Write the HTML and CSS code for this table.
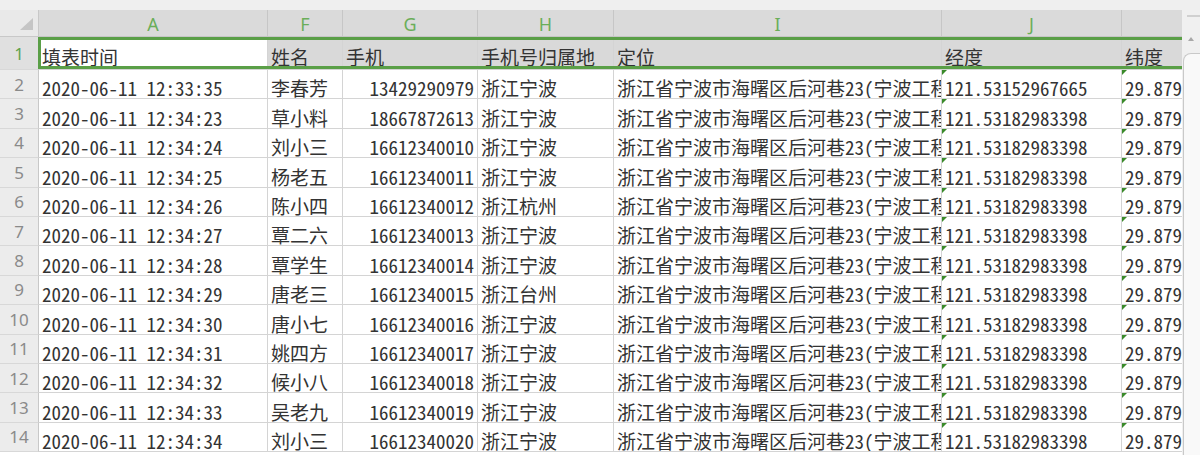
FILE: index.html
```html
<!DOCTYPE html>
<html lang="zh-CN">
<head>
<meta charset="utf-8">
<title>Sheet</title>
<link rel="stylesheet" href="styles.css">
</head>
<body>
<div class="topbar"></div>
<div class="main">
  <div class="sheet">
    <div class="corner"><svg width="13" height="12" viewBox="0 0 13 12"><polygon points="0,12 13,0 13,12" fill="#c5c5c5"/></svg></div>
    <div class="colhead">A</div>
    <div class="colhead">F</div>
    <div class="colhead">G</div>
    <div class="colhead">H</div>
    <div class="colhead">I</div>
    <div class="colhead">J</div>
    <div class="colhead">K</div>

    <div class="rowhead sel">1</div>
    <div class="cell first active">填表时间</div>
    <div class="cell first sel">姓名</div>
    <div class="cell first sel">手机</div>
    <div class="cell first sel">手机号归属地</div>
    <div class="cell first sel">定位</div>
    <div class="cell first sel">经度</div>
    <div class="cell first sel">纬度</div>

    <div class="rowhead">2</div>
    <div class="cell">2020-06-11 12:33:35</div>
    <div class="cell">李春芳</div>
    <div class="cell num">13429290979</div>
    <div class="cell">浙江宁波</div>
    <div class="cell">浙江省宁波市海曙区后河巷23(宁波工程学院)</div>
    <div class="cell flag">121.53152967665</div>
    <div class="cell flag">29.87951283645</div>

    <div class="rowhead">3</div>
    <div class="cell">2020-06-11 12:34:23</div>
    <div class="cell">草小料</div>
    <div class="cell num">18667872613</div>
    <div class="cell">浙江宁波</div>
    <div class="cell">浙江省宁波市海曙区后河巷23(宁波工程学院)</div>
    <div class="cell flag">121.53182983398</div>
    <div class="cell flag">29.87951283645</div>

    <div class="rowhead">4</div>
    <div class="cell">2020-06-11 12:34:24</div>
    <div class="cell">刘小三</div>
    <div class="cell num">16612340010</div>
    <div class="cell">浙江宁波</div>
    <div class="cell">浙江省宁波市海曙区后河巷23(宁波工程学院)</div>
    <div class="cell flag">121.53182983398</div>
    <div class="cell flag">29.87951283645</div>

    <div class="rowhead">5</div>
    <div class="cell">2020-06-11 12:34:25</div>
    <div class="cell">杨老五</div>
    <div class="cell num">16612340011</div>
    <div class="cell">浙江宁波</div>
    <div class="cell">浙江省宁波市海曙区后河巷23(宁波工程学院)</div>
    <div class="cell flag">121.53182983398</div>
    <div class="cell flag">29.87951283645</div>

    <div class="rowhead">6</div>
    <div class="cell">2020-06-11 12:34:26</div>
    <div class="cell">陈小四</div>
    <div class="cell num">16612340012</div>
    <div class="cell">浙江杭州</div>
    <div class="cell">浙江省宁波市海曙区后河巷23(宁波工程学院)</div>
    <div class="cell flag">121.53182983398</div>
    <div class="cell flag">29.87951283645</div>

    <div class="rowhead">7</div>
    <div class="cell">2020-06-11 12:34:27</div>
    <div class="cell">覃二六</div>
    <div class="cell num">16612340013</div>
    <div class="cell">浙江宁波</div>
    <div class="cell">浙江省宁波市海曙区后河巷23(宁波工程学院)</div>
    <div class="cell flag">121.53182983398</div>
    <div class="cell flag">29.87951283645</div>

    <div class="rowhead">8</div>
    <div class="cell">2020-06-11 12:34:28</div>
    <div class="cell">覃学生</div>
    <div class="cell num">16612340014</div>
    <div class="cell">浙江宁波</div>
    <div class="cell">浙江省宁波市海曙区后河巷23(宁波工程学院)</div>
    <div class="cell flag">121.53182983398</div>
    <div class="cell flag">29.87951283645</div>

    <div class="rowhead">9</div>
    <div class="cell">2020-06-11 12:34:29</div>
    <div class="cell">唐老三</div>
    <div class="cell num">16612340015</div>
    <div class="cell">浙江台州</div>
    <div class="cell">浙江省宁波市海曙区后河巷23(宁波工程学院)</div>
    <div class="cell flag">121.53182983398</div>
    <div class="cell flag">29.87951283645</div>

    <div class="rowhead">10</div>
    <div class="cell">2020-06-11 12:34:30</div>
    <div class="cell">唐小七</div>
    <div class="cell num">16612340016</div>
    <div class="cell">浙江宁波</div>
    <div class="cell">浙江省宁波市海曙区后河巷23(宁波工程学院)</div>
    <div class="cell flag">121.53182983398</div>
    <div class="cell flag">29.87951283645</div>

    <div class="rowhead">11</div>
    <div class="cell">2020-06-11 12:34:31</div>
    <div class="cell">姚四方</div>
    <div class="cell num">16612340017</div>
    <div class="cell">浙江宁波</div>
    <div class="cell">浙江省宁波市海曙区后河巷23(宁波工程学院)</div>
    <div class="cell flag">121.53182983398</div>
    <div class="cell flag">29.87951283645</div>

    <div class="rowhead">12</div>
    <div class="cell">2020-06-11 12:34:32</div>
    <div class="cell">候小八</div>
    <div class="cell num">16612340018</div>
    <div class="cell">浙江宁波</div>
    <div class="cell">浙江省宁波市海曙区后河巷23(宁波工程学院)</div>
    <div class="cell flag">121.53182983398</div>
    <div class="cell flag">29.87951283645</div>

    <div class="rowhead">13</div>
    <div class="cell">2020-06-11 12:34:33</div>
    <div class="cell">吴老九</div>
    <div class="cell num">16612340019</div>
    <div class="cell">浙江宁波</div>
    <div class="cell">浙江省宁波市海曙区后河巷23(宁波工程学院)</div>
    <div class="cell flag">121.53182983398</div>
    <div class="cell flag">29.87951283645</div>

    <div class="rowhead">14</div>
    <div class="cell">2020-06-11 12:34:34</div>
    <div class="cell">刘小三</div>
    <div class="cell num">16612340020</div>
    <div class="cell">浙江宁波</div>
    <div class="cell">浙江省宁波市海曙区后河巷23(宁波工程学院)</div>
    <div class="cell flag">121.53182983398</div>
    <div class="cell flag">29.87951283645</div>

    <div class="selection"></div>
  </div>
  <div class="vscroll">
    <div class="split"></div>
    <div class="arrow"></div>
    <div class="thumb"></div>
  </div>
</div>
</body>
</html>
```

FILE: styles.css
```css
* { box-sizing: border-box; }
html, body { margin: 0; padding: 0; }
body {
  width: 1200px;
  height: 455px;
  overflow: hidden;
  background: #f0f0f0;
  font-family: "Noto Sans", "Liberation Sans", sans-serif;
}
.topbar { height: 10px; background: #efefef; }
.main { display: flex; height: 445px; }

.sheet {
  position: relative;
  width: 1182px;
  flex: none;
  overflow: hidden;
  display: grid;
  grid-template-columns: 39px 229px 75px 135px 136px 328px 180px 240px;
  grid-template-rows: 27px 33px repeat(13, 29.4px);
  align-content: start;
  background: #fff;
}

.corner {
  background: #e9e9e9;
  border-right: 1px solid #c8c8c8;
  border-bottom: 1px solid #c8c8c8;
  display: flex;
  justify-content: flex-end;
  align-items: flex-end;
  padding: 0 5px 6px 0;
}
.colhead {
  background: #dadada;
  border-right: 1px solid #c6c6c6;
  border-bottom: 1px solid #c6c6c6;
  color: #6aae59;
  font-size: 18px;
  display: flex;
  align-items: center;
  justify-content: center;
  padding-top: 2px;
}
.rowhead {
  background: #ececec;
  border-right: 1px solid #c8c8c8;
  border-bottom: 1px solid #d8d8d8;
  color: #8a8a8a;
  font-size: 17px;
  display: flex;
  align-items: center;
  justify-content: center;
}
.rowhead.sel { background: #e0e0e0; color: #5ea34d; }

.cell {
  position: relative;
  border-right: 1px solid #d4d4d4;
  border-bottom: 1px solid #d4d4d4;
  font-family: "Noto Sans Mono CJK SC", "Noto Sans CJK SC", monospace;
  font-size: 19px;
  line-height: 19px;
  color: #333333;
  padding: 0 3px 1px 3px;
  display: flex;
  align-items: flex-end;
  white-space: nowrap;
  overflow: hidden;
}
.cell.first { padding-bottom: 3px; }
.cell.num { justify-content: flex-end; }
.cell.sel { background: #d9d9d9; }
.cell.active { background: #fff; }
.cell.flag::before {
  content: "";
  position: absolute;
  left: 0;
  top: 0;
  border-top: 5px solid #3a8a2a;
  border-right: 5px solid transparent;
}

.selection {
  position: absolute;
  left: 38px;
  top: 27px;
  width: 1200px;
  height: 32px;
  border: 3px solid #5a9f47;
  pointer-events: none;
}

.vscroll {
  width: 18px;
  flex: none;
  background: #f0f0f0;
  display: flex;
  flex-direction: column;
  align-items: flex-end;
}
.split { width: 13px; height: 2px; background: #d0d0d0; margin-top: 5px; }
.arrow {
  align-self: center;
  margin-top: 20px;
  width: 0;
  height: 0;
  border-left: 3px solid transparent;
  border-right: 3px solid transparent;
  border-bottom: 4px solid #a8a8a8;
}
.thumb {
  flex: 1;
  width: 17px;
  margin-top: 12px;
  background: #f9f9f9;
  border-top: 1px solid #c9c9c9;
  border-left: 1px solid #c9c9c9;
  border-radius: 8px 0 0 0;
}
```
